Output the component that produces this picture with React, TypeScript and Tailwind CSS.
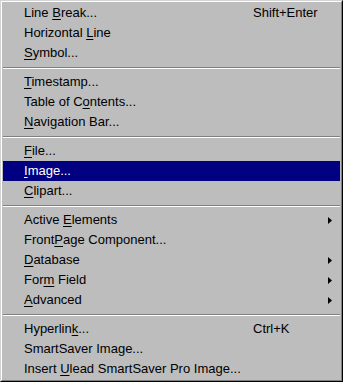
type Item = {
   pre: string;
   key?: string;
   post?: string;
   shortcut?: string;
   sub?: boolean;
   active?: boolean;
};

const groups: Item[][] = [
   [
      { pre: 'Line ', key: 'B', post: 'reak...', shortcut: 'Shift+Enter' },
      { pre: 'Horizontal ', key: 'L', post: 'ine' },
      { pre: '', key: 'S', post: 'ymbol...' },
   ],
   [
      { pre: '', key: 'T', post: 'imestamp...' },
      { pre: 'Table of C', key: 'o', post: 'ntents...' },
      { pre: '', key: 'N', post: 'avigation Bar...' },
   ],
   [
      { pre: '', key: 'F', post: 'ile...' },
      { pre: '', key: 'I', post: 'mage...', active: true },
      { pre: '', key: 'C', post: 'lipart...' },
   ],
   [
      { pre: 'Active ', key: 'E', post: 'lements', sub: true },
      { pre: 'Front', key: 'P', post: 'age Component...' },
      { pre: '', key: 'D', post: 'atabase', sub: true },
      { pre: 'For', key: 'm', post: ' Field', sub: true },
      { pre: '', key: 'A', post: 'dvanced', sub: true },
   ],
   [
      { pre: 'Hyperlin', key: 'k', post: '...', shortcut: 'Ctrl+K' },
      { pre: 'SmartSaver Image...' },
      { pre: 'Insert ', key: 'U', post: 'lead SmartSaver Pro Image...' },
   ],
];

function Row({ item }: { item: Item }) {
   return (
      <div
         className={
            item.active
               ? 'flex items-center h-5 bg-[#000080] text-white'
               : 'flex items-center h-5 text-black'
         }
      >
         <span className="pl-[21px] w-[250px] whitespace-pre">
            {item.pre}
            {item.key && <span className="underline underline-offset-2">{item.key}</span>}
            {item.post}
         </span>
         <span className="flex-1 whitespace-pre">{item.shortcut}</span>
         {item.sub && (
            <svg width="4" height="7" viewBox="0 0 4 7" className="mr-[8px]">
               <path d="M0 0 L4 3.5 L0 7 Z" fill="black" />
            </svg>
         )}
      </div>
   );
}

function Separator() {
   return (
      <div className="pt-[4px] pb-[3px]">
         <div className="h-px bg-[#808080]" />
         <div className="h-px bg-white" />
      </div>
   );
}

export default function App() {
   return (
      <div
         className="w-[343px] h-[382px] bg-[#bdbdbd] border border-t-[#d4d4d4] border-l-[#d4d4d4] border-r-black border-b-black text-[13px] leading-[20px]"
         style={{ fontFamily: '"Liberation Sans", Arial, sans-serif' }}
      >
         <div className="h-full border border-t-white border-l-white border-r-[#808080] border-b-[#808080] p-px">
            {groups.map((g, gi) => (
               <div key={gi}>
                  {gi > 0 && <Separator />}
                  {g.map((item, i) => (
                     <Row key={i} item={item} />
                  ))}
               </div>
            ))}
         </div>
      </div>
   );
}
